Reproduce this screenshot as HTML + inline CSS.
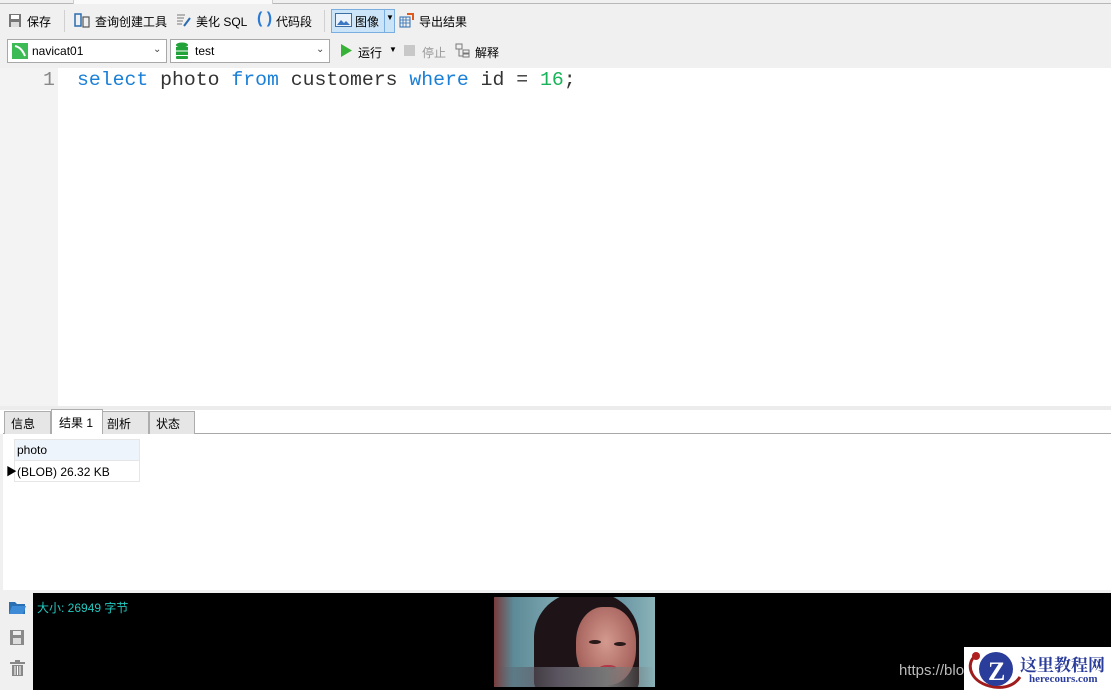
<!DOCTYPE html>
<html><head><meta charset="utf-8"><style>
*{margin:0;padding:0;box-sizing:border-box}
body{width:1111px;height:690px;overflow:hidden;background:#f0f0f0;font-family:"Liberation Sans","Noto Sans CJK SC",sans-serif;font-size:12px;color:#000;position:relative}
.a{position:absolute}
.t{position:absolute;font-size:12px;white-space:nowrap}
.code{font-family:"Liberation Mono",monospace;font-size:19.8px;color:#333}
.kw{color:#1a7fd6}
.num{color:#19b35a}
.combo{position:absolute;height:24px;background:#fff;border:1px solid #a8a8a8}
.tab{position:absolute;top:411px;height:23px;background:#e6e6e6;border:1px solid #adadad;border-bottom:none;font-size:12px;padding:3px 0 0 6px}
</style></head><body>
<!-- top strip -->
<div class="a" style="left:0;top:0;width:1111px;height:4px;background:#f0f0f0;border-bottom:1px solid #b8b8b8"></div>
<div class="a" style="left:73px;top:0;width:200px;height:4px;background:#fafafa;border-left:1px solid #ccc;border-right:1px solid #ccc"></div>
<!-- toolbar row1 -->
<svg class="a" style="left:8px;top:13px" width="14" height="15"><rect x="1" y="1" width="12" height="13" fill="#777"/><rect x="3" y="2" width="8" height="4" fill="#fff"/><rect x="3" y="9" width="8" height="5" fill="#ddd"/></svg>
<div class="t" style="left:27px;top:13px">保存</div>
<div class="a" style="left:64px;top:10px;width:1px;height:22px;background:#d0d0d0"></div>
<svg class="a" style="left:74px;top:12px" width="16" height="16"><rect x="1" y="2" width="6" height="12" fill="none" stroke="#2b6cb0" stroke-width="1.5"/><rect x="9" y="5" width="6" height="10" fill="none" stroke="#555" stroke-width="1.2"/></svg>
<div class="t" style="left:95px;top:13px">查询创建工具</div>
<svg class="a" style="left:176px;top:12px" width="16" height="16"><path d="M1 3h8M1 6h7M1 9h6M1 12h5" stroke="#777"/><path d="M8 14l6-8" stroke="#2b6cb0" stroke-width="2"/></svg>
<div class="t" style="left:196px;top:13px">美化 SQL</div>
<div class="t" style="left:257px;top:10px;font-size:16px;color:#2b7bd6;font-weight:bold">( )</div>
<div class="t" style="left:276px;top:13px">代码段</div>
<div class="a" style="left:324px;top:10px;width:1px;height:22px;background:#d0d0d0"></div>
<div class="a" style="left:331px;top:9px;width:64px;height:24px;background:#cce4f7;border:1px solid #7aaee0"></div>
<div class="a" style="left:384px;top:10px;width:1px;height:22px;background:#7aaee0"></div>
<svg class="a" style="left:335px;top:13px" width="17" height="14"><rect x="0.5" y="0.5" width="16" height="13" fill="#eaf2fb" stroke="#3a6ea5"/><path d="M2 12l4-5 3 3 2-2 4 4z" fill="#3a78c2"/></svg>
<div class="t" style="left:355px;top:13px">图像</div>
<div class="t" style="left:386px;top:13px;font-size:8px">▼</div>
<svg class="a" style="left:399px;top:12px" width="16" height="16"><rect x="1" y="5" width="10" height="10" fill="none" stroke="#2b6cb0"/><path d="M1 8h10M1 11h10M4 5v10M7 5v10" stroke="#2b6cb0" stroke-width=".8"/><path d="M8 2h6v6" stroke="#e05a1a" stroke-width="2" fill="none"/></svg>
<div class="t" style="left:419px;top:13px">导出结果</div>
<!-- row2 -->
<div class="combo" style="left:7px;top:39px;width:160px"></div>
<svg class="a" style="left:12px;top:43px" width="16" height="16"><rect width="16" height="16" fill="#3cba54"/><path d="M3 3c5 1 8 5 10 10" stroke="#fff" stroke-width="2" fill="none"/></svg>
<div class="t" style="left:32px;top:44px">navicat01</div>
<div class="t" style="left:153px;top:44px;font-size:10px;color:#444">⌄</div>
<div class="combo" style="left:170px;top:39px;width:160px"></div>
<svg class="a" style="left:175px;top:42px" width="14" height="18"><ellipse cx="7" cy="3" rx="6" ry="2.5" fill="#22a33a"/><rect x="1" y="5" width="12" height="3.5" fill="#22a33a"/><rect x="1" y="9.5" width="12" height="3.5" fill="#22a33a"/><rect x="1" y="14" width="12" height="3" rx="1" fill="#22a33a"/></svg>
<div class="t" style="left:195px;top:44px">test</div>
<div class="t" style="left:316px;top:44px;font-size:10px;color:#444">⌄</div>
<svg class="a" style="left:340px;top:44px" width="12" height="13"><path d="M1 0l11 6.5L1 13z" fill="#36b236"/></svg>
<div class="t" style="left:358px;top:44px">运行</div>
<div class="t" style="left:389px;top:45px;font-size:8px">▼</div>
<div class="a" style="left:404px;top:45px;width:11px;height:11px;background:#c8c8c8"></div>
<div class="t" style="left:422px;top:44px;color:#999">停止</div>
<svg class="a" style="left:455px;top:43px" width="16" height="15"><rect x="1" y="1" width="6" height="5" fill="none" stroke="#777"/><rect x="8" y="7" width="6" height="3" fill="none" stroke="#777"/><rect x="8" y="11" width="6" height="3" fill="none" stroke="#777"/><path d="M4 6v7h4" stroke="#777" fill="none"/></svg>
<div class="t" style="left:475px;top:44px">解释</div>
<!-- editor -->
<div class="a" style="left:0;top:68px;width:58px;height:338px;background:#f3f3f3"></div>
<div class="a" style="left:58px;top:68px;width:1053px;height:338px;background:#fff"></div>
<div class="t code" style="left:43px;top:69px;color:#888">1</div>
<div class="t code" style="left:77px;top:69px"><span class="kw">select</span> photo <span class="kw">from</span> customers <span class="kw">where</span> id = <span class="num">16</span>;</div>
<div class="a" style="left:0;top:406px;width:1111px;height:4px;background:#ececec"></div>
<!-- tabs -->
<div class="a" style="left:0;top:410px;width:1111px;height:24px;background:#fff"></div>
<div class="a" style="left:3px;top:433px;width:1108px;height:1px;background:#a8a8a8"></div>
<div class="tab" style="left:4px;width:47px">信息</div>
<div class="tab" style="left:51px;top:409px;width:52px;height:25px;background:#fff;padding-top:4px;padding-left:7px">结果 1</div>
<div class="tab" style="left:102px;width:47px;padding-left:4px">剖析</div>
<div class="tab" style="left:149px;width:46px">状态</div>
<!-- results -->
<div class="a" style="left:3px;top:434px;width:1108px;height:156px;background:#fff"></div>
<div class="a" style="left:14px;top:439px;width:126px;height:22px;background:#eef4fb;border:1px solid #e6e6e6"></div>
<div class="t" style="left:17px;top:443px">photo</div>
<div class="a" style="left:14px;top:461px;width:126px;height:21px;border:1px solid #e6e6e6;border-top:none"></div>
<div class="t" style="left:6px;top:463px;font-size:11px">▶</div>
<div class="t" style="left:17px;top:465px">(BLOB) 26.32 KB</div>
<!-- bottom -->
<div class="a" style="left:0;top:590px;width:1111px;height:100px;background:#f0f0f0"></div>
<div class="a" style="left:33px;top:593px;width:1078px;height:97px;background:#000"></div>
<svg class="a" style="left:9px;top:600px" width="17" height="14"><path d="M0 2h6l2 2h8v10H0z" fill="#2a6fb3"/><path d="M3 6h14l-3 8H0z" fill="#3d8ad6"/></svg>
<svg class="a" style="left:10px;top:630px" width="14" height="15"><rect x="0" y="0" width="14" height="15" fill="#8a8a8a"/><rect x="3" y="1" width="8" height="4" fill="#eee"/><rect x="3" y="8" width="8" height="6" fill="#ddd"/></svg>
<svg class="a" style="left:10px;top:660px" width="15" height="16"><rect x="0" y="2" width="15" height="2" fill="#888"/><rect x="5" y="0" width="5" height="2" fill="#888"/><rect x="2" y="5" width="11" height="11" fill="#888"/><path d="M5 6v9M7.5 6v9M10 6v9" stroke="#fff"/></svg>
<div class="t" style="left:37px;top:599px;color:#23c8c0;font-size:12px">大小: 26949 字节</div>
<div class="a" style="left:494px;top:597px;width:161px;height:90px;overflow:hidden;background:linear-gradient(90deg,#7a3b3b 0%,#5c8a96 12%,#7fa9b3 40%,#6d98a5 80%,#8ab3b8 100%)">
 <div class="a" style="left:40px;top:-5px;width:105px;height:100px;border-radius:45% 45% 10% 10%;background:#1e1418"></div>
 <div class="a" style="left:82px;top:10px;width:60px;height:78px;border-radius:45%;background:radial-gradient(ellipse at 50% 45%,#d49a8f,#a7645e 70%,#5a2d2e)"></div>
 <div class="a" style="left:95px;top:43px;width:12px;height:4px;background:#2a1a1a;border-radius:50%"></div>
 <div class="a" style="left:120px;top:45px;width:12px;height:4px;background:#2a1a1a;border-radius:50%"></div>
 <div class="a" style="left:106px;top:68px;width:16px;height:5px;background:#b03848;border-radius:50%"></div>
 <div class="a" style="left:0;top:70px;width:161px;height:20px;background:linear-gradient(90deg,transparent,#5a5560 40%,#777 70%,transparent)"></div>
</div>
<div class="t" style="left:899px;top:662px;color:#bbb;font-size:15px">https://blo</div>
<div class="a" style="left:964px;top:647px;width:147px;height:43px;background:#fff"></div>
<svg class="a" style="left:964px;top:647px" width="60" height="43"><path d="M10 10C2 18 6 36 30 40C44 42 52 36 56 30" stroke="#a01c1c" stroke-width="3" fill="none"/><circle cx="12" cy="9" r="4" fill="#b02020"/><circle cx="32" cy="22" r="17" fill="#2b3d9a"/><text x="24" y="33" font-family="Liberation Serif" font-weight="bold" font-size="26" fill="#fff">Z</text></svg>
<div class="t" style="left:1020px;top:651px;font-family:'Liberation Serif','Noto Serif CJK SC',serif;font-weight:bold;font-size:17px;color:#2b3d9a">这里教程网</div>
<div class="t" style="left:1029px;top:673px;font-family:'Liberation Serif',serif;font-weight:bold;font-size:11px;color:#2b3d9a">herecours.com</div>
</body></html>
